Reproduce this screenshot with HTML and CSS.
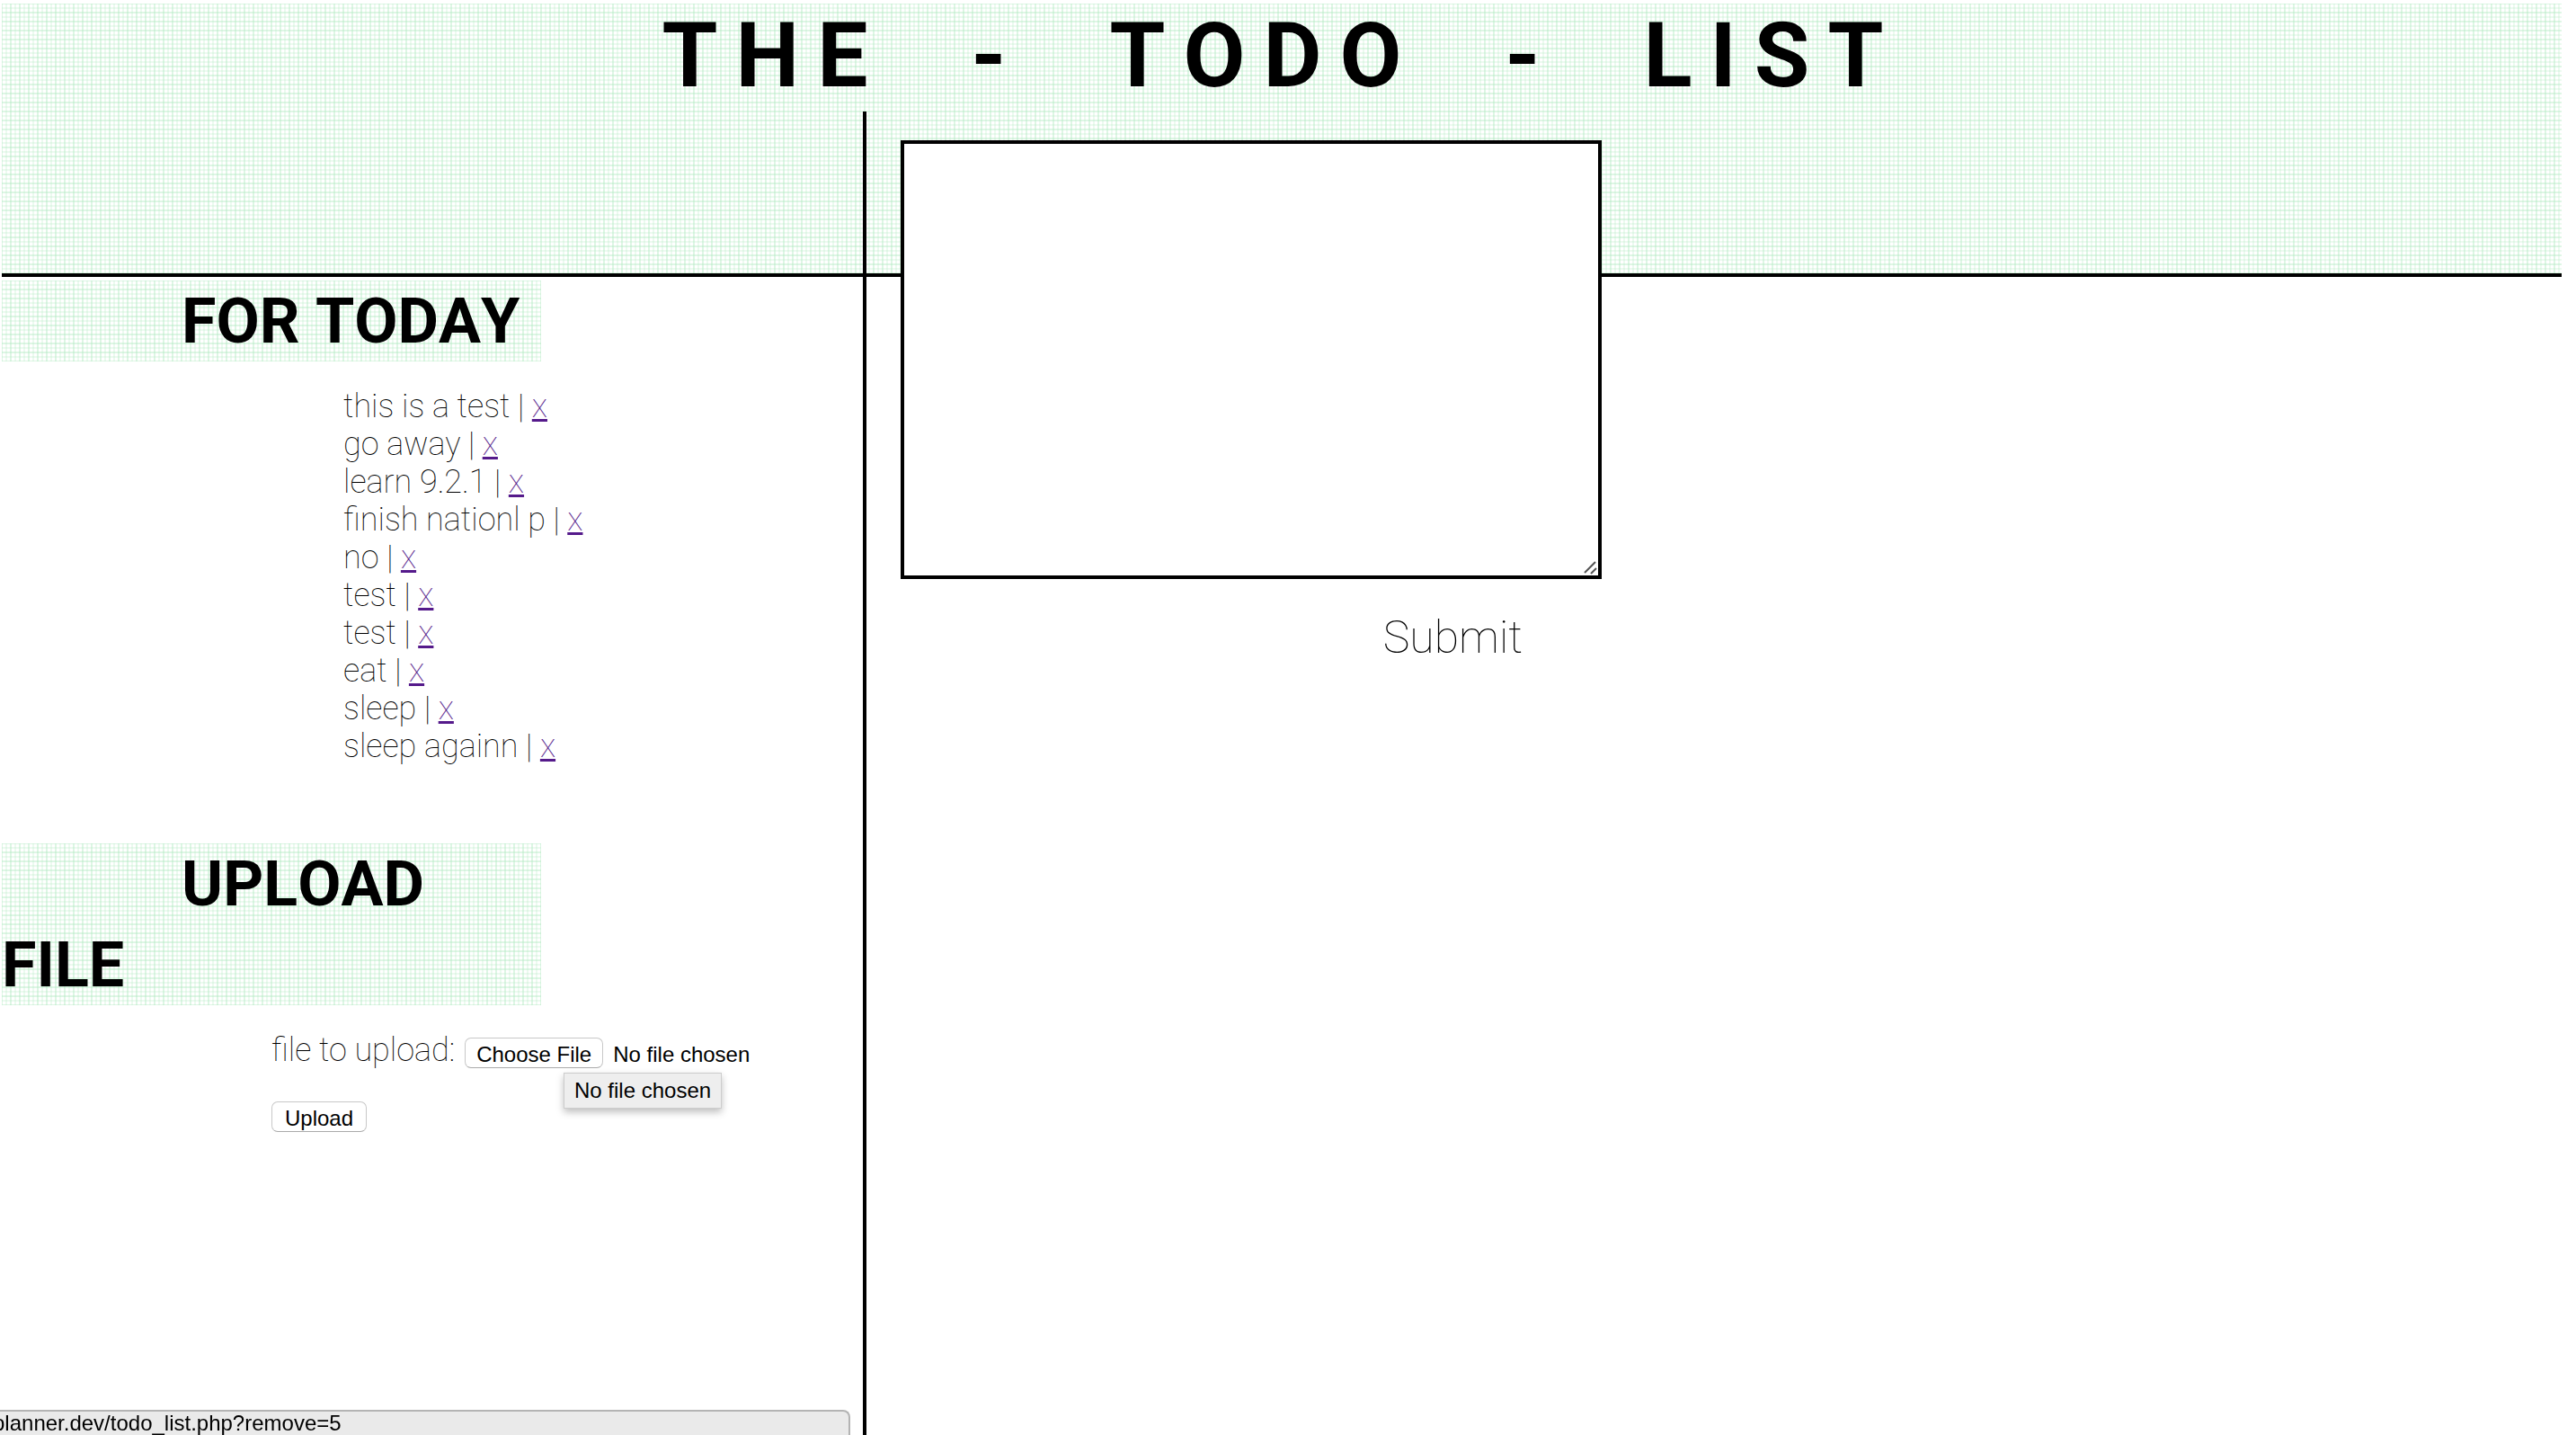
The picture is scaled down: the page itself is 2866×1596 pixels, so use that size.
FILE: index.html
```html
<!DOCTYPE html>
<html lang="en">
<head>
<meta charset="utf-8">
<title>The Todo List</title>
<link rel="stylesheet" href="styles.css">
</head>
<body>
<div class="page">
  <header class="banner graph-paper">
    <h1 class="title">THE - TODO - LIST</h1>
  </header>
  <aside class="sidebar">
    <h2 class="section-title graph-paper">FOR TODAY</h2>
    <ul class="todos">
      <li>this is a test | <a href="?remove=0">x</a></li>
      <li>go away | <a href="?remove=1">x</a></li>
      <li>learn 9.2.1 | <a href="?remove=2">x</a></li>
      <li>finish nationl p | <a href="?remove=3">x</a></li>
      <li>no | <a href="?remove=4">x</a></li>
      <li>test | <a href="?remove=5">x</a></li>
      <li>test | <a href="?remove=6">x</a></li>
      <li>eat | <a href="?remove=7">x</a></li>
      <li>sleep | <a href="?remove=8">x</a></li>
      <li>sleep againn | <a href="?remove=9">x</a></li>
    </ul>
    <h2 class="section-title graph-paper">UPLOAD FILE</h2>
    <form class="upload">
      <div class="file-row">
        <label for="file">file to upload:</label>
        <input class="file" type="file" id="file">
        <div class="tooltip" role="tooltip">No file chosen</div>
      </div>
      <button class="upload-button" type="button">Upload</button>
    </form>
  </aside>
  <main class="entry">
    <form class="entry-form">
      <div class="note-box">
        <textarea class="note" aria-label="New todo"></textarea>
        <svg class="grip" viewBox="0 0 16 16" aria-hidden="true"><path d="M1 13 13 1M8 14l6-6"/></svg>
      </div>
      <button class="submit" type="button">Submit</button>
    </form>
  </main>
</div>
<div class="status">planner.dev/todo_list.php?remove=5</div>
</body>
</html>
```
FILE: styles.css
```css
* { box-sizing: border-box; }

body {
  margin: 0;
  background: #fff;
  color: #000;
  font: 100 36px/42px Roboto, sans-serif;
}

.page {
  display: grid;
  grid-template-columns: 958px 1fr;
  grid-template-rows: 120px 184px auto;
  min-height: 100vh;
  padding: 4px 16px 0 2px;
}

.graph-paper {
  background-image:
    linear-gradient(90deg, rgba(180, 235, 195, .25) 2px, transparent 2px),
    linear-gradient(rgba(180, 235, 195, .25) 2px, transparent 2px),
    linear-gradient(90deg, rgba(180, 235, 195, .25) 2px, transparent 2px),
    linear-gradient(rgba(180, 235, 195, .25) 2px, transparent 2px);
  background-position: -1px -1px;
  background-size: 10px 10px, 10px 10px, 5px 5px, 5px 5px;
}

.banner {
  grid-area: 1 / 1 / 3 / 3;
  border-bottom: 4px solid #000;
}

.title {
  margin: 0;
  font-size: 100px;
  font-weight: 700;
  font-kerning: none;
  line-height: 116px;
  letter-spacing: 20px;
  word-spacing: 50px;
  text-align: center;
}

.sidebar {
  grid-area: 3 / 1;
  padding-top: 4px;
}

.section-title {
  width: 600px;
  margin: 0;
  font-size: 70px;
  font-weight: 700;
  font-kerning: none;
  line-height: 90px;
  text-indent: 200px;
}

.todos {
  margin: 29px 0 87px;
  padding-left: 380px;
  list-style: none;
}

.todos a { color: #551a8b; }

.upload {
  padding: 29px 0 0 300px;
}

.file-row {
  position: relative;
  display: flex;
  gap: 11px;
  margin-bottom: 36px;
}

.file,
.upload-button,
.tooltip,
.status {
  font: 24px/26px "Liberation Sans", Arial, sans-serif;
}

.file {
  width: 340px;
  height: 34px;
  margin-top: 7px;
}

.file::file-selector-button,
.upload-button {
  height: 34px;
  margin: 0 11px 0 0;
  padding: 4px 12px 0;
  border: 1px solid #c8c8c8;
  border-bottom-color: #aaa;
  border-radius: 7px;
  background: #fff;
  color: #000;
  font: 24px/26px "Liberation Sans", Arial, sans-serif;
}

.upload-button {
  display: block;
  padding: 4px 14px 0;
}

.tooltip {
  position: absolute;
  top: 46px;
  left: 325px;
  padding: 6px 11px;
  border: 1px solid #ccc;
  background: #eee;
  box-shadow: 0 4px 8px rgba(0, 0, 0, .25);
}

.entry {
  grid-area: 2 / 2 / 4 / 3;
  border-left: 4px solid #000;
  padding: 32px 0 0 38px;
}

.entry-form { width: 780px; }

.note-box { position: relative; }

.note {
  display: block;
  width: 100%;
  height: 488px;
  border: 4px solid #000;
  background: #fff;
  resize: none;
}

.grip {
  position: absolute;
  right: 4px;
  bottom: 4px;
  width: 16px;
  height: 16px;
  fill: none;
  stroke: #555;
  stroke-width: 2px;
}

.submit {
  display: block;
  margin: 35px 88px 0 auto;
  padding: 0;
  border: 0;
  background: none;
  color: #000;
  font: 100 50px/60px Roboto, sans-serif;
}

.status {
  position: fixed;
  left: 0;
  bottom: 0;
  width: 946px;
  height: 28px;
  overflow: hidden;
  border: 2px solid #b4b4b4;
  border-width: 2px 2px 0 0;
  border-radius: 0 8px 0 0;
  background: #eaeaea;
  text-indent: -8px;
}
```
